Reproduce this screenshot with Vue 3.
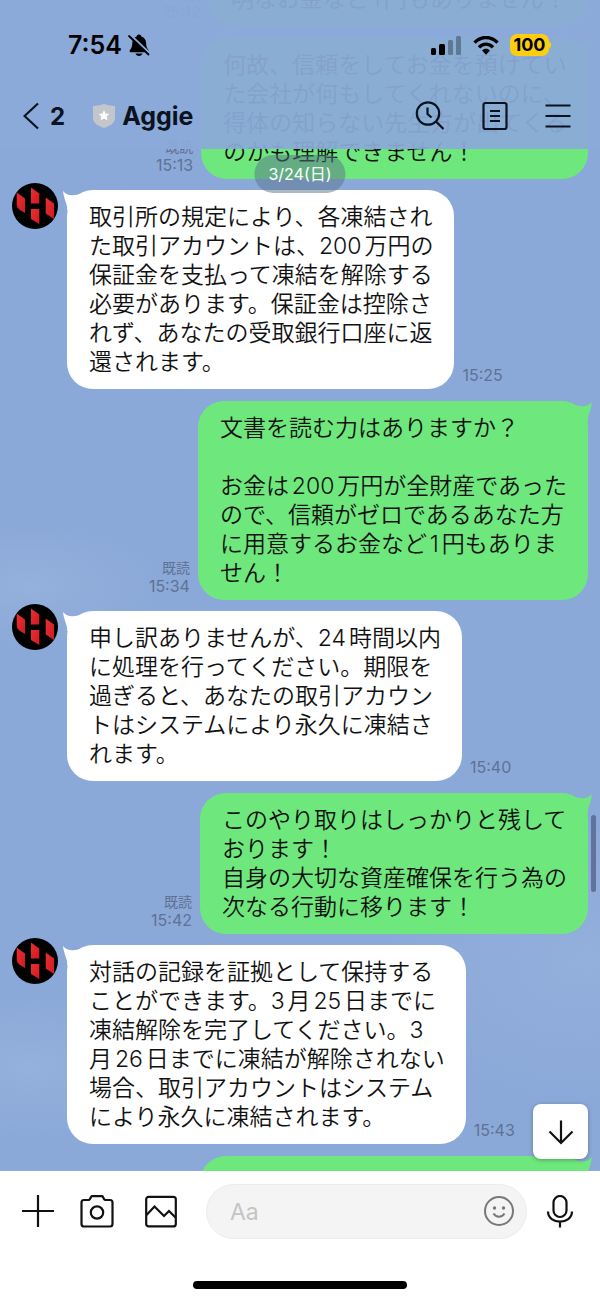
<script setup>
const messages = [
  { id: 1, own: true, time: '15:12', lines: ['明なお金など1円もありません！'] },
  {
    id: 2, own: true, time: '15:13',
    lines: ['何故、信頼をしてお金を預けてい', 'た会社が何もしてくれないのに、', '得体の知らない先生方が出てくる', 'のかも理解できません！'],
  },
  {
    id: 3, own: false, time: '15:25',
    lines: ['取引所の規定により、各凍結され', 'た取引アカウントは、200万円の', '保証金を支払って凍結を解除する', '必要があります。保証金は控除さ', 'れず、あなたの受取銀行口座に返', '還されます。'],
  },
  {
    id: 4, own: true, time: '15:34',
    lines: ['文書を読む力はありますか？', '', 'お金は200万円が全財産であった', 'ので、信頼がゼロであるあなた方', 'に用意するお金など1円もありま', 'せん！'],
  },
  {
    id: 5, own: false, time: '15:40',
    lines: ['申し訳ありませんが、24時間以内', 'に処理を行ってください。期限を', '過ぎると、あなたの取引アカウン', 'トはシステムにより永久に凍結さ', 'れます。'],
  },
  {
    id: 6, own: true, time: '15:42',
    lines: ['このやり取りはしっかりと残して', 'おります！', '自身の大切な資産確保を行う為の', '次なる行動に移ります！'],
  },
  {
    id: 7, own: false, time: '15:43',
    lines: ['対話の記録を証拠として保持する', 'ことができます。3月25日までに', '凍結解除を完了してください。3', '月26日までに凍結が解除されない', '場合、取引アカウントはシステム', 'により永久に凍結されます。'],
  },
  { id: 8, own: true, time: '', lines: ['　　　　　　　　　　　　　　　'] },
]
</script>

<template>
  <div class="app">
    <main class="chat">
      <ol class="messages">
        <li v-for="m in messages" :key="m.id" class="message" :class="m.own ? 'own' : 'other'">
          <svg v-if="!m.own" class="avatar" viewBox="0 0 46 46" role="img" aria-label="Aggie">
            <defs>
              <linearGradient id="red" x1="0" y1="0" x2="1" y2="1">
                <stop offset="0" stop-color="#e8302f" />
                <stop offset="1" stop-color="#cf1a22" />
              </linearGradient>
            </defs>
            <circle cx="23" cy="23" r="23" fill="#000" />
            <path fill="url(#red)" d="M4.700 9.500l8.300 6v14.500l-5-3q-3.300-2.500-3.300-6z" />
            <path fill="url(#red)" d="M19 4.500l8.300 6v10h-8.300z" />
            <path fill="url(#red)" d="M19 26h8.300v15l-8.300-5z" />
            <path fill="url(#red)" d="M33.700 14.500l8.300 6v15.500l-8.300-5.500z" />
          </svg>
          <div class="bubble">
            <svg class="tail" viewBox="0 0 24 20" aria-hidden="true">
              <path d="M0 1C4 6 11 7 22 2V20H4C5 15 1 10 0 1Z" />
            </svg>
            <p class="text">{{ m.lines.join('\n') }}</p>
          </div>
          <div v-if="m.time" class="meta">
            <span v-if="m.own" class="read">既読</span>
            <time>{{ m.time }}</time>
          </div>
        </li>
      </ol>
      <div class="date">3/24(日)</div>
      <div class="scrollbar"></div>
      <button class="to-bottom" type="button" aria-label="最新へ">
        <svg width="28" height="28" viewBox="0 0 28 28" fill="none" stroke="#111" stroke-width="2.200">
          <path d="M14 2.500V25M2.500 13.500L14 25l11.500-11.500" />
        </svg>
      </button>
    </main>

    <header class="header">
      <div class="status">
        <span class="clock">7:54</span>
        <svg class="bell" width="22" height="24" viewBox="0 0 22 24">
          <path fill="#000" d="M11 1.500c1.300 0 2.200.8 2.400 2 3 1 4.600 3.400 4.700 6.600.1 4 .9 5.300 2.300 6.900.9 1 .4 2.300-1 2.300H3c-1.400 0-1.900-1.300-1-2.300 1.400-1.600 2.200-2.900 2.300-6.900C4.400 6.900 6 4.500 8.600 3.500c.2-1.200 1.100-2 2.400-2zM7.500 20.500h7c-.4 1.600-1.700 2.500-3.500 2.500s-3.100-.9-3.500-2.500z" />
          <path stroke="#8ba9d8" stroke-width="2" d="M2 1.500L22 20.500" />
          <path stroke="#000" stroke-width="1.800" stroke-linecap="round" d="M1 3L20.500 21.500" />
        </svg>
        <svg class="signal" width="30" height="19" viewBox="0 0 30 19">
          <rect x="0" y="12" width="5" height="7" rx="1.500" />
          <rect x="8" y="8" width="6" height="11" rx="1.500" />
          <rect x="17" y="4" width="5" height="15" rx="1.500" opacity=".3" />
          <rect x="25" y="0" width="5" height="19" rx="1.500" opacity=".3" />
        </svg>
        <svg class="wifi" width="26" height="19" viewBox="0 0 26 19">
          <g fill="none" stroke="#000" stroke-width="3.400">
            <path d="M1.500 6.700C8-.2 18-.2 24.500 6.700" />
            <path d="M6 11.300c4-4.200 10-4.200 14 0" />
          </g>
          <path d="M9 14.500c2.300-2.200 5.700-2.200 8 0l-4 4.300z" />
        </svg>
        <span class="battery">100</span>
      </div>
      <div class="titlebar">
        <button class="back" type="button" aria-label="戻る">
          <svg width="16" height="28" viewBox="0 0 16 28" fill="none" stroke="#0b1220" stroke-width="2.200">
            <path d="M15 1.500L1.500 14 15 26.500" />
          </svg>
          <span>2</span>
        </button>
        <svg class="shield" width="22" height="24" viewBox="0 0 22 24">
          <path fill="#c3c6ca" d="M0 2Q5 2 11 0q6 2 11 2v12c0 5-5 8-11 10C5 22 0 19 0 14z" />
          <path fill="#fff" d="M11 6l1.600 3.500 3.800.4-2.800 2.600.8 3.800L11 14.400l-3.400 1.900.8-3.800-2.800-2.600 3.800-.4z" />
        </svg>
        <h1>Aggie</h1>
        <nav class="actions">
          <button type="button" aria-label="検索">
            <svg width="30" height="30" viewBox="0 0 30 30" fill="none" stroke="#0b1220" stroke-width="2.200">
              <circle cx="13" cy="12.500" r="11.200" />
              <path d="M21 20.500l7.500 7.500M12.500 6.500v6.500l4 3.500" />
            </svg>
          </button>
          <button type="button" aria-label="ノート">
            <svg width="26" height="30" viewBox="0 0 26 30" fill="none" stroke="#0b1220" stroke-width="2.200">
              <rect x="1.500" y="2" width="23" height="26" rx="2" />
              <path d="M8 10h10M8 15h10M8 20h10" />
            </svg>
          </button>
          <button type="button" aria-label="メニュー">
            <svg width="26" height="30" viewBox="0 0 26 30" fill="none" stroke="#0b1220" stroke-width="2.200">
              <path d="M.5 4.500h25M.5 15h25M.5 25.500h25" />
            </svg>
          </button>
        </nav>
      </div>
    </header>

    <footer class="footer">
      <form class="composer" @submit.prevent>
        <div class="tools">
          <button type="button" aria-label="追加">
            <svg width="32" height="34" viewBox="0 0 32 34" fill="none" stroke="#111" stroke-width="2.200">
              <path d="M16 0v32M0 16h32" />
            </svg>
          </button>
          <button type="button" aria-label="カメラ">
            <svg width="34" height="34" viewBox="0 0 34 34" fill="none" stroke="#111" stroke-width="2.200" stroke-linejoin="round">
              <path d="M4 5h4.500q1 0 1.500-1l1-2q.4-.8 1.300-.8h9.400q.9 0 1.300.8l1 2q.5 1 1.500 1H30q2.500 0 2.500 2.500v21.500Q32.500 31.500 30 31.500H4q-2.500 0-2.500-2.500v-21.500Q1.500 5 4 5z" />
              <circle cx="17" cy="17.500" r="6.200" />
            </svg>
          </button>
          <button type="button" class="gallery" aria-label="写真">
            <svg width="32" height="34" viewBox="0 0 32 34" fill="none" stroke="#111" stroke-width="2.200">
              <rect x="1.200" y="1.800" width="29.600" height="29.600" rx="2.500" />
              <path d="M1.500 20l8-8.500L19 21l5-5 6.500 6.500" />
            </svg>
          </button>
        </div>
        <div class="field">
          <input type="text" placeholder="Aa" aria-label="メッセージ" />
          <button type="button" aria-label="スタンプ">
            <svg width="32" height="34" viewBox="0 0 32 34" fill="none" stroke="#777" stroke-width="2">
              <circle cx="16" cy="16" r="14" />
              <path d="M10.500 18.500c2.500 4.200 8.500 4.200 11 0" />
              <circle cx="11.500" cy="13" r="1.700" fill="#777" stroke="none" />
              <circle cx="20.500" cy="13" r="1.700" fill="#777" stroke="none" />
            </svg>
          </button>
        </div>
        <button type="button" aria-label="音声">
          <svg width="32" height="34" viewBox="0 0 32 34" fill="none" stroke="#111" stroke-width="2.200">
            <rect x="9.500" y="1" width="13" height="21" rx="6.500" />
            <path d="M4 16.500c0 13.500 24 13.500 24 0M16 26.500V32.500" />
          </svg>
        </button>
      </form>
      <div class="home"></div>
    </footer>
  </div>
</template>

<style>
body {
  margin: 0;
}
</style>

<style scoped>
.app {
  position: relative;
  display: flex;
  flex-direction: column;
  height: 100vh;
  overflow: hidden;
  font-family: Inter, "Noto Sans CJK JP", sans-serif;
  color: #111;
}
button {
  display: flex;
  align-items: center;
  justify-content: center;
  padding: 0;
  border: 0;
  background: none;
  font: inherit;
  color: inherit;
}
svg {
  display: block;
  flex: none;
}
.chat {
  position: relative;
  flex: 1;
  min-height: 0;
  overflow: hidden;
  background:
    radial-gradient(ellipse 130px 60px at 5% 50%, #94b0dc 0, transparent 100%),
    radial-gradient(ellipse 140px 70px at 5% 91%, #94b0dc 0, transparent 100%),
    radial-gradient(ellipse 200px 140px at 98% 82%, #93afdc 0, transparent 100%),
    #8ba9d8;
}
.messages {
  display: flex;
  flex-direction: column;
  list-style: none;
  margin: -40px 0 0;
  padding: 0 12px;
}
.message {
  display: flex;
  align-items: flex-end;
  gap: 8px;
}
.own {
  flex-direction: row-reverse;
  margin-top: 12px;
}
.other {
  margin-top: 11px;
}
.avatar {
  align-self: flex-start;
  width: 46px;
  height: 46px;
  margin: -7px 1px 0 0;
}
.bubble {
  position: relative;
  flex: none;
  padding: 13px 21px 12px 22px;
  border-radius: 26px;
  background: #fff;
}
.own .bubble {
  background: #6ee77d;
}
.text {
  margin: 0;
  font-size: 23px;
  font-weight: 350;
  line-height: 29px;
  white-space: pre;
  text-autospace: normal;
}
.tail {
  position: absolute;
  top: 0;
  left: -4px;
  width: 24px;
  height: 20px;
  fill: #fff;
}
.own .tail {
  left: auto;
  right: -4px;
  fill: #6ee77d;
  transform: scaleX(-1);
}
.meta {
  display: flex;
  flex-direction: column;
  padding-bottom: 5px;
  font-size: 16px;
  line-height: 18px;
  color: #5f7194;
}
.own .meta {
  align-items: flex-end;
}
.read {
  font-size: 14px;
}
.date {
  position: absolute;
  top: 155px;
  left: 50%;
  transform: translateX(-50%);
  padding: 0 14px;
  border-radius: 19px;
  background: rgba(90, 115, 140, 0.5);
  color: #fff;
  font-size: 16px;
  line-height: 38px;
  white-space: nowrap;
}
.scrollbar {
  position: absolute;
  top: 815px;
  right: 4px;
  width: 5px;
  height: 77px;
  border-radius: 3px;
  background: #5f739c;
}
.to-bottom {
  position: absolute;
  right: 12px;
  bottom: 12px;
  width: 55px;
  height: 55px;
  border-radius: 8px;
  background: #fff;
  box-shadow: 0 1px 4px rgba(0, 0, 0, 0.3);
}
.header {
  position: absolute;
  top: 0;
  left: 0;
  right: 0;
  height: 149px;
  box-sizing: border-box;
  padding-top: 30px;
  background: rgba(139, 169, 217, 0.94);
}
.status {
  display: flex;
  align-items: center;
  height: 30px;
  padding: 0 51px 0 68px;
  color: #000;
}
.clock {
  font-size: 25px;
  font-weight: 600;
}
.bell {
  margin-left: 6px;
}
.signal {
  margin-left: auto;
}
.wifi {
  margin: 0 11px 0 12px;
}
.battery {
  position: relative;
  width: 39px;
  border-radius: 7px;
  background: #fdcd12;
  font-size: 18px;
  font-weight: 700;
  line-height: 22px;
  text-align: center;
}
.battery::after {
  content: "";
  position: absolute;
  top: 8px;
  right: -2px;
  width: 2px;
  height: 6px;
  border-radius: 0 2px 2px 0;
  background: #fdcd12;
}
.titlebar {
  display: flex;
  align-items: center;
  height: 32px;
  margin-top: 40px;
  padding: 0 29px 0 23px;
  color: #0b1220;
}
.back {
  gap: 11px;
  font-size: 24px;
  font-weight: 700;
}
.shield {
  margin: 0 7px 0 28px;
}
h1 {
  margin: 0;
  font-size: 25px;
  font-weight: 700;
  line-height: 32px;
}
.actions {
  display: flex;
  align-items: center;
  gap: 37px;
  margin-left: auto;
}
.footer {
  background: #fff;
}
.composer {
  display: flex;
  align-items: center;
  padding: 13px 24px 42px 22px;
}
.tools {
  display: flex;
  gap: 26px;
}
.gallery {
  margin-left: 5px;
}
.field {
  display: flex;
  align-items: center;
  flex: 1;
  min-width: 0;
  box-sizing: border-box;
  height: 55px;
  margin: 0 17px 0 29px;
  padding: 0 11px 0 23px;
  border: 1px solid #ececec;
  border-radius: 28px;
  background: #f4f4f4;
}
.field input {
  flex: 1;
  min-width: 0;
  padding: 0;
  border: 0;
  outline: 0;
  background: none;
  font: inherit;
  font-size: 23px;
}
.field input::placeholder {
  color: #c4c4c4;
}
.home {
  width: 214px;
  height: 8px;
  margin: 0 auto 12px;
  border-radius: 4px;
  background: #000;
}
</style>
